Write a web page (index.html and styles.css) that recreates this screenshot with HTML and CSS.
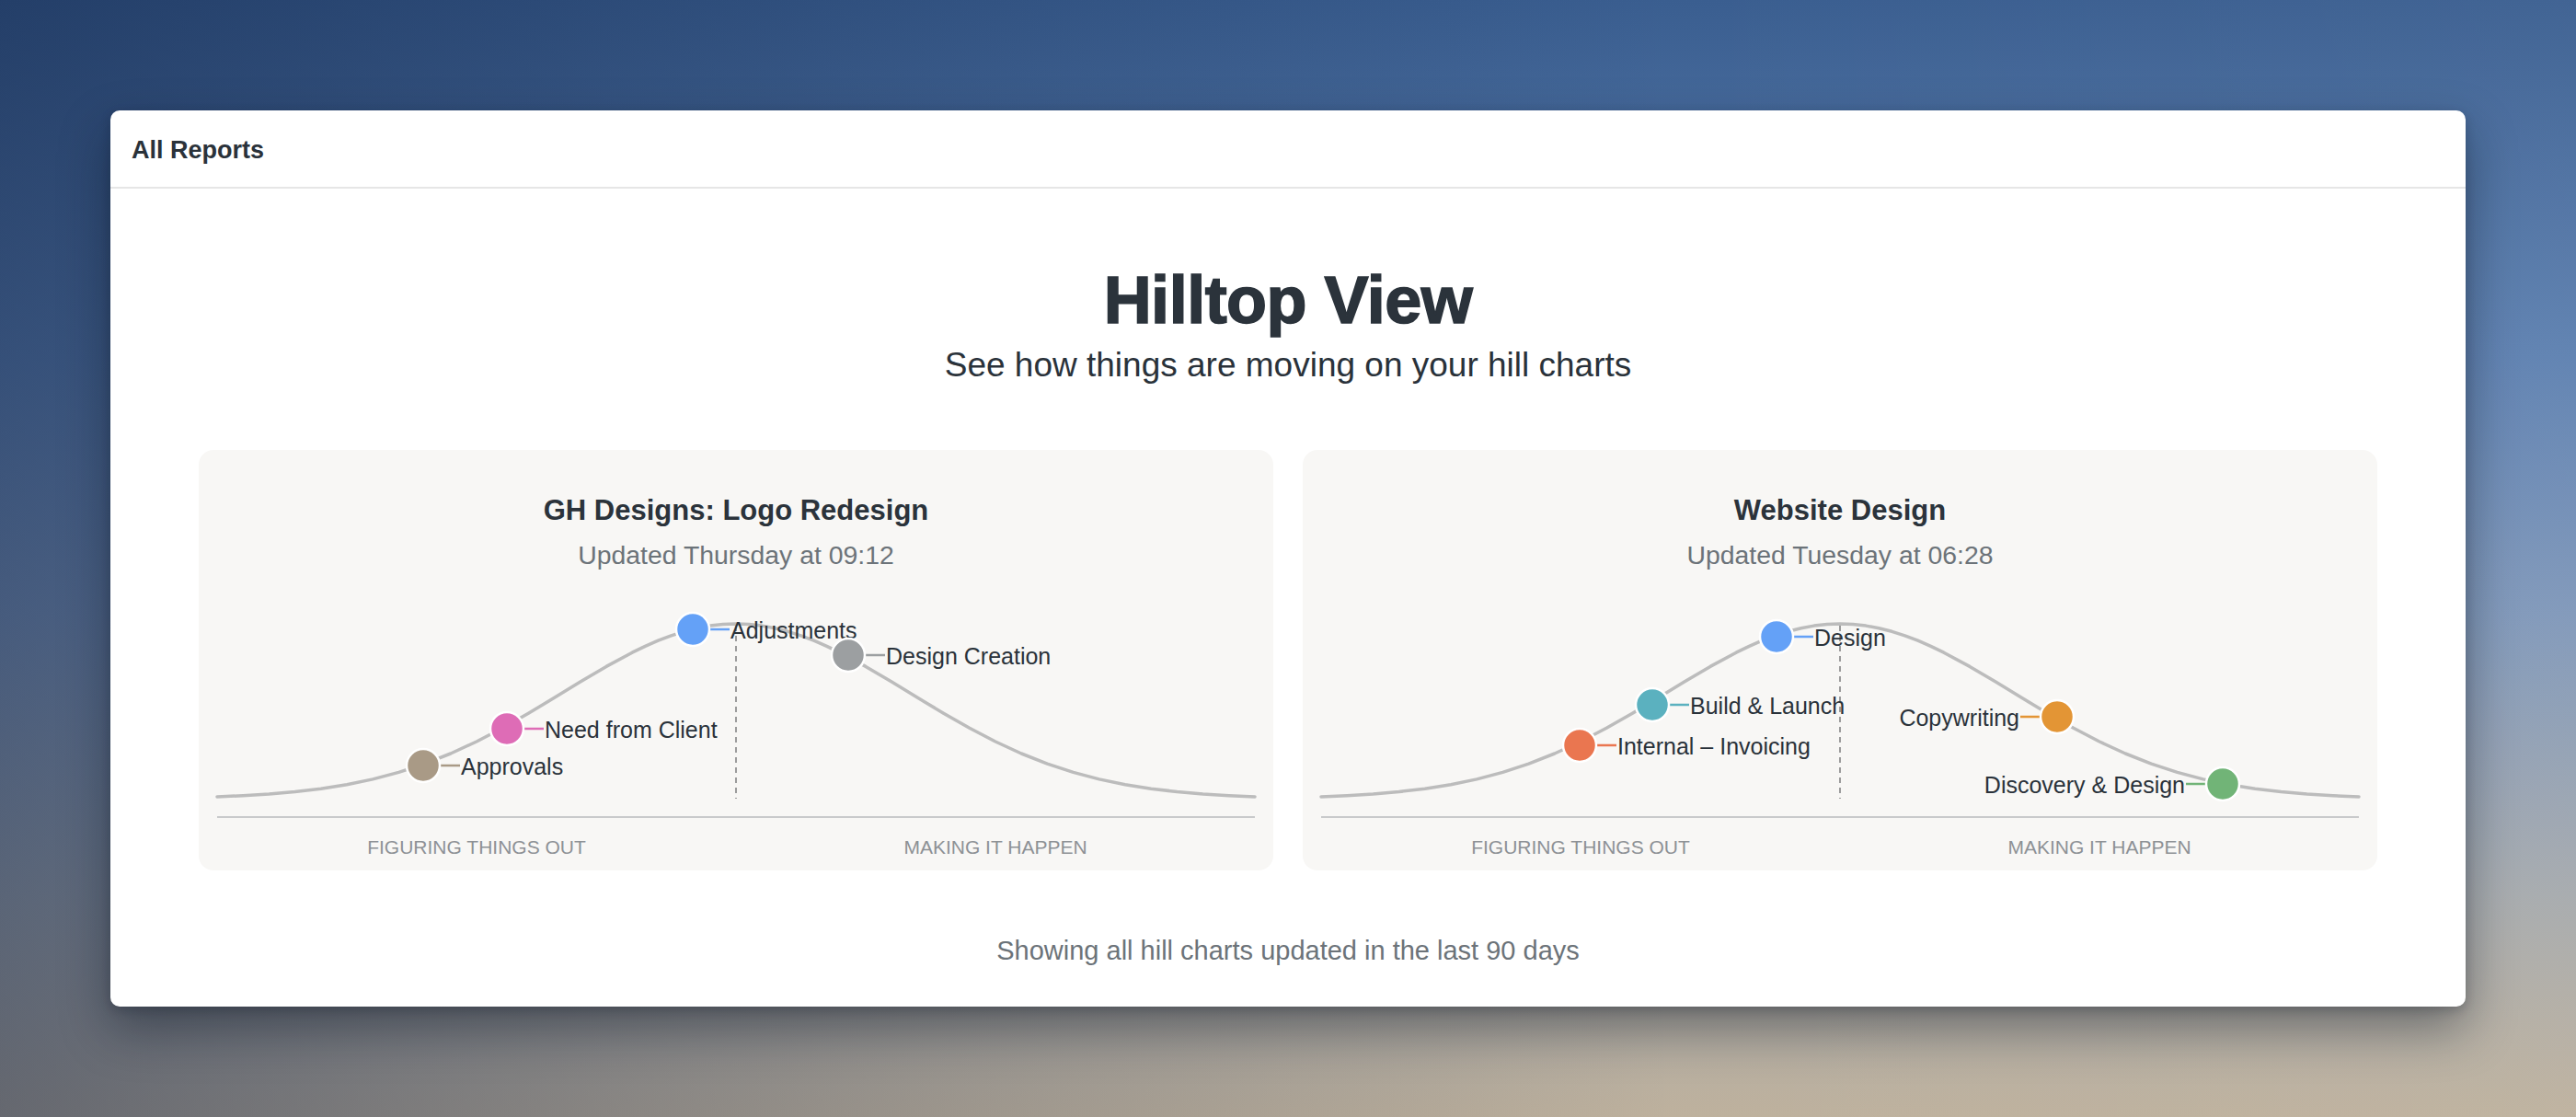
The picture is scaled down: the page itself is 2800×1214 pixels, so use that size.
FILE: index.html
```html
<!DOCTYPE html>
<html lang="en">
<head>
<meta charset="utf-8">
<title>Hilltop View</title>
<link rel="stylesheet" href="styles.css">
</head>
<body>
<div class="stage">
  <main class="window">
    <header class="window-header">All Reports</header>
    <section class="window-body">
      <h1 class="hero-title">Hilltop View</h1>
      <p class="hero-sub">See how things are moving on your hill charts</p>

      <div class="charts">
        <article class="chart-card">
          <h2 class="chart-title">GH Designs: Logo Redesign</h2>
          <p class="chart-updated">Updated Thursday at 09:12</p>
          <svg class="hill" viewBox="0 0 1128 250" preserveAspectRatio="none">
            <line class="axis" x1="0" y1="248" x2="1128" y2="248"/>
            <line class="midline" x1="564" y1="40" x2="564" y2="228"/>
            <path class="curve" d="M0 225.9 L28.2 224.7 L56.4 223 L84.6 220.5 L112.8 217.2 L141 212.7 L169.2 206.9 L197.4 199.4 L225.6 190.1 L253.8 179 L282 166 L310.2 151.3 L338.4 135.2 L366.6 118.3 L394.8 101 L423 84.4 L451.2 69.2 L465.3 62.4 L479.4 56.2 L493.5 50.8 L507.6 46.3 L521.7 42.7 L535.8 40.1 L549.9 38.5 L564 38 L578.1 38.5 L592.2 40.1 L606.3 42.7 L620.4 46.3 L634.5 50.8 L648.6 56.2 L662.7 62.4 L676.8 69.2 L705 84.4 L733.2 101 L761.4 118.3 L789.6 135.2 L817.8 151.3 L846 166 L874.2 179 L902.4 190.1 L930.6 199.4 L958.8 206.9 L987 212.7 L1015.2 217.2 L1043.4 220.5 L1071.6 223 L1099.8 224.7 L1128 225.9"/>

            <line class="link link-taupe" x1="224" y1="192" x2="264" y2="192"/>
            <circle class="dot dot-taupe" cx="224" cy="192" r="18"/>
            <text class="label" x="265" y="202">Approvals</text>

            <line class="link link-pink" x1="315" y1="152" x2="355" y2="152"/>
            <circle class="dot dot-pink" cx="315" cy="152" r="18"/>
            <text class="label" x="356" y="162">Need from Client</text>

            <line class="link link-blue" x1="517" y1="44" x2="557" y2="44"/>
            <circle class="dot dot-blue" cx="517" cy="44" r="18"/>
            <text class="label" x="558" y="54">Adjustments</text>

            <line class="link link-grey" x1="686" y1="72" x2="726" y2="72"/>
            <circle class="dot dot-grey" cx="686" cy="72" r="18"/>
            <text class="label" x="727" y="82">Design Creation</text>
          </svg>
          <div class="axis-labels">
            <span class="axis-label">FIGURING THINGS OUT</span>
            <span class="axis-label">MAKING IT HAPPEN</span>
          </div>
        </article>

        <article class="chart-card">
          <h2 class="chart-title">Website Design</h2>
          <p class="chart-updated">Updated Tuesday at 06:28</p>
          <svg class="hill" viewBox="0 0 1128 250" preserveAspectRatio="none">
            <line class="axis" x1="0" y1="248" x2="1128" y2="248"/>
            <line class="midline" x1="564" y1="40" x2="564" y2="228"/>
            <path class="curve" d="M0 225.9 L28.2 224.7 L56.4 223 L84.6 220.5 L112.8 217.2 L141 212.7 L169.2 206.9 L197.4 199.4 L225.6 190.1 L253.8 179 L282 166 L310.2 151.3 L338.4 135.2 L366.6 118.3 L394.8 101 L423 84.4 L451.2 69.2 L465.3 62.4 L479.4 56.2 L493.5 50.8 L507.6 46.3 L521.7 42.7 L535.8 40.1 L549.9 38.5 L564 38 L578.1 38.5 L592.2 40.1 L606.3 42.7 L620.4 46.3 L634.5 50.8 L648.6 56.2 L662.7 62.4 L676.8 69.2 L705 84.4 L733.2 101 L761.4 118.3 L789.6 135.2 L817.8 151.3 L846 166 L874.2 179 L902.4 190.1 L930.6 199.4 L958.8 206.9 L987 212.7 L1015.2 217.2 L1043.4 220.5 L1071.6 223 L1099.8 224.7 L1128 225.9"/>

            <line class="link link-red" x1="281" y1="170" x2="321" y2="170"/>
            <circle class="dot dot-red" cx="281" cy="170" r="18"/>
            <text class="label" x="322" y="180">Internal – Invoicing</text>

            <line class="link link-teal" x1="360" y1="126" x2="400" y2="126"/>
            <circle class="dot dot-teal" cx="360" cy="126" r="18"/>
            <text class="label" x="401" y="136">Build &amp; Launch</text>

            <line class="link link-blue" x1="495" y1="52" x2="535" y2="52"/>
            <circle class="dot dot-blue" cx="495" cy="52" r="18"/>
            <text class="label" x="536" y="62">Design</text>

            <line class="link link-orange" x1="760" y1="139" x2="800" y2="139"/>
            <circle class="dot dot-orange" cx="800" cy="139" r="18"/>
            <text class="label label-end" x="759" y="149">Copywriting</text>

            <line class="link link-green" x1="940" y1="212" x2="980" y2="212"/>
            <circle class="dot dot-green" cx="980" cy="212" r="18"/>
            <text class="label label-end" x="939" y="222">Discovery &amp; Design</text>
          </svg>
          <div class="axis-labels">
            <span class="axis-label">FIGURING THINGS OUT</span>
            <span class="axis-label">MAKING IT HAPPEN</span>
          </div>
        </article>
      </div>

      <p class="footnote">Showing all hill charts updated in the last 90 days</p>
    </section>
  </main>
</div>
</body>
</html>
```

FILE: styles.css
```css
html, body {
  margin: 0;
  padding: 0;
  height: 100%;
}

body {
  font-family: "Liberation Sans", Arial, sans-serif;
  color: #2a323a;
  background:
    linear-gradient(90deg, rgba(14, 32, 66, 0.5) 0%, rgba(14, 32, 66, 0.18) 38%, rgba(14, 32, 66, 0) 65%, rgba(255, 255, 255, 0.04) 100%),
    linear-gradient(180deg, #3a5e90 0%, #5d80b0 32%, #7f97b9 55%, #a6aaad 80%, #beb19d 100%);
  min-height: 1214px;
}

.stage {
  padding: 120px 120px 0 120px;
}

.window {
  background: #ffffff;
  border-radius: 10px;
  box-shadow: 0 24px 54px rgba(8, 16, 32, 0.42), 0 4px 12px rgba(8, 16, 32, 0.2);
  overflow: hidden;
}

.window-header {
  height: 27px;
  padding: 30px 23px 26px 23px;
  font-size: 27px;
  line-height: 27px;
  font-weight: 700;
  color: #2a323a;
  border-bottom: 2px solid #e6e6e6;
}

.window-body {
  padding: 81px 96px 44px 96px;
  text-align: center;
}

.hero-title {
  margin: 0;
  font-size: 72px;
  line-height: 80px;
  font-weight: 900;
  color: #2b333b;
  -webkit-text-stroke: 1.6px #2b333b;
  letter-spacing: -0.5px;
}

.hero-sub {
  margin: 9px 0 0 0;
  font-size: 37px;
  line-height: 44px;
  color: #2a323a;
}

.charts {
  margin-top: 70px;
  display: grid;
  grid-template-columns: 1fr 1fr;
  gap: 32px;
}

.chart-card {
  background: #f8f7f5;
  border-radius: 16px;
  padding: 48px 20px 13px 20px;
}

.chart-title {
  margin: 0;
  font-size: 31px;
  line-height: 36px;
  font-weight: 700;
  color: #2b333b;
}

.chart-updated {
  margin: 13px 0 0 0;
  font-size: 28.4px;
  line-height: 34px;
  color: #6c7379;
}

.hill {
  display: block;
  width: 100%;
  height: 250px;
  margin-top: 20px;
  overflow: visible;
}

.axis {
  stroke: #c9cacb;
  stroke-width: 2;
}

.midline {
  stroke: #9b9b9b;
  stroke-width: 2;
  stroke-dasharray: 6 5;
}

.curve {
  fill: none;
  stroke: #bcbcbc;
  stroke-width: 3.5;
  stroke-linejoin: round;
  stroke-linecap: round;
}

.dot {
  stroke: #ffffff;
  stroke-width: 2.5;
}

.link {
  stroke-width: 2.5;
}

.label {
  font-family: "Liberation Sans", Arial, sans-serif;
  font-size: 25px;
  fill: #2a323a;
}

.label-end {
  text-anchor: end;
}

.dot-blue { fill: #64a1f7; }
.link-blue { stroke: #64a1f7; }
.dot-grey { fill: #9c9fa1; }
.link-grey { stroke: #9c9fa1; }
.dot-pink { fill: #de6cb6; }
.link-pink { stroke: #de6cb6; }
.dot-taupe { fill: #a99a86; }
.link-taupe { stroke: #a99a86; }
.dot-teal { fill: #5bb1bf; }
.link-teal { stroke: #5bb1bf; }
.dot-red { fill: #ea7650; }
.link-red { stroke: #ea7650; }
.dot-orange { fill: #e39535; }
.link-orange { stroke: #e39535; }
.dot-green { fill: #71b477; }
.link-green { stroke: #71b477; }

.axis-labels {
  display: grid;
  grid-template-columns: 1fr 1fr;
  margin-top: 19px;
}

.axis-label {
  font-size: 21px;
  line-height: 24px;
  color: #8d9195;
  text-align: center;
}

.footnote {
  margin: 70px 0 0 0;
  font-size: 29px;
  line-height: 34px;
  color: #6c7379;
}
```
